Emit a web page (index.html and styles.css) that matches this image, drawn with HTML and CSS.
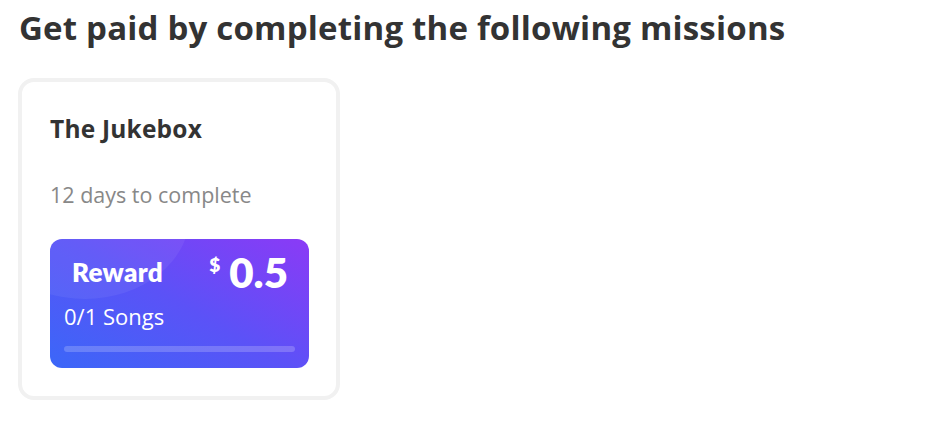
FILE: index.html
```html
<!DOCTYPE html>
<html lang="en">
<head>
<meta charset="utf-8">
<title>Missions</title>
<link rel="stylesheet" href="styles.css">
</head>
<body>
<main class="page">
  <h1 class="title">Get paid by completing the following missions</h1>
  <section class="missions">
    <article class="card">
      <h2 class="card-title">The Jukebox</h2>
      <p class="card-deadline">12 days to complete</p>
      <div class="reward">
        <div class="reward-head">
          <span class="reward-label">Reward</span>
          <span class="reward-amount"><span class="currency">$</span><span class="value">0.5</span></span>
        </div>
        <div class="reward-progress-text">0/1 Songs</div>
        <div class="progress"><div class="progress-fill" style="width:0%"></div></div>
      </div>
    </article>
  </section>
</main>
</body>
</html>
```
FILE: styles.css
```css
* { box-sizing: border-box; }
html, body { margin: 0; padding: 0; background: #fff; }
body { font-family: "Open Sans", "Noto Sans", sans-serif; color: #333; }
.page { padding: 8px 19px; }
.title {
  margin: 0;
  font-size: 33px;
  line-height: 40px;
  font-weight: 700;
  color: #333;
  letter-spacing: 0.2px;
}
.missions { display: flex; margin-top: 30px; margin-left: -1px; }
.card {
  width: 322px;
  height: 322px;
  border: 4px solid #f1f1f1;
  border-radius: 16px;
  padding: 32px 27px 0 28px;
  display: flex;
  flex-direction: column;
}
.card-title {
  margin: 0;
  font-size: 24.5px;
  line-height: 30px;
  font-weight: 700;
  color: #333;
  letter-spacing: 0.2px;
}
.card-deadline {
  margin: 36px 0 0;
  font-size: 21.5px;
  line-height: 30px;
  color: #888;
}
.reward {
  margin-top: 29px;
  height: 129px;
  border-radius: 12px;
  position: relative;
  overflow: hidden;
  color: #fff;
  padding: 15px 14px 0 14px;
  background: linear-gradient(30deg, #3b67f8 0%, #5b52f7 50%, #8b3af6 100%);
}
.reward::before {
  content: "";
  position: absolute;
  left: -70px;
  top: -110px;
  width: 210px;
  height: 170px;
  border-radius: 50%;
  background: rgba(255,255,255,0.06);
}
.reward-head {
  position: relative;
  display: flex;
  justify-content: space-between;
  align-items: flex-start;
  padding: 0 7px 0 8px;
}
.reward-label {
  font-family: "Lato", "Inter", sans-serif;
  font-weight: 800;
  font-size: 26px;
  line-height: 32px;
  margin-top: 2px;
  letter-spacing: 0.3px;
}
.reward-amount { display: flex; align-items: flex-start; }
.currency {
  font-family: "Lato", sans-serif;
  font-weight: 800;
  font-size: 19px;
  line-height: 20px;
  margin-right: 9px;
  margin-top: 1px;
}
.value {
  font-family: "Lato", sans-serif;
  font-weight: 800;
  font-size: 42px;
  line-height: 36px;
}
.reward-progress-text {
  position: relative;
  font-size: 22px;
  line-height: 28px;
  margin-top: 12px;
}
.progress {
  position: relative;
  margin-top: 16px;
  height: 6px;
  border-radius: 3px;
  background: rgba(255,255,255,0.2);
}
.progress-fill { height: 100%; border-radius: 3px; background: #fff; }
```
